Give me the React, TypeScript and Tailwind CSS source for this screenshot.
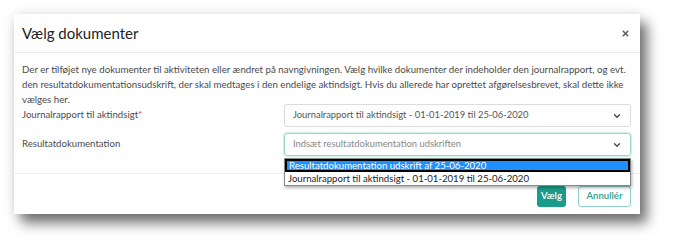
import { ChevronDown, X } from "lucide-react";

export default function App() {
  return (
    <div className="w-[675px] h-[250px] bg-white pt-[14px] pl-[14px] font-['Lato',sans-serif] text-[#4a4a4a]">
      <div className="relative w-[626px] h-[200px] bg-white flex flex-col shadow-[7px_9px_12px_rgba(0,0,0,0.55),0_0_12px_rgba(0,0,0,0.1)]">
        {/* header */}
        <div className="h-[39px] flex items-center justify-between pl-[8px] pr-[10px] border-b border-[#ececec]">
          <h1 className="text-[15px] text-[#222]">Vælg dokumenter</h1>
          <X className="w-[9px] h-[9px] text-[#666]" strokeWidth={4.5} />
        </div>

        {/* body */}
        <div className="flex-1 px-[8px] pt-[9px]">
          <p className="text-[9.7px] leading-[15px] whitespace-nowrap">
            Der er tilføjet nye dokumenter til aktiviteten eller ændret på navngivningen. Vælg hvilke dokumenter der indeholder den journalrapport, og evt.
            <br />
            den resultatdokumentationsudskrift, der skal medtages i den endelige aktindsigt. Hvis du allerede har oprettet afgørelsesbrevet, skal dette ikke
            <br />
            vælges her.
          </p>
          <div className="mt-[-3px] flex flex-col gap-[6px]">
            <div className="flex items-center h-[23px]">
              <label className="w-[262px] text-[9.6px]">
                Journalrapport til aktindsigt<span className="text-[#e0454f]">*</span>
              </label>
              <div className="w-[347px] h-[23px] flex items-center justify-between px-[8px] border border-[#dcdcdc] rounded-[3px] text-[9.4px] text-[#555]">
                <span>Journalrapport til aktindsigt - 01-01-2019 til 25-06-2020</span>
                <ChevronDown className="w-[10px] h-[10px] text-[#444]" strokeWidth={3} />
              </div>
            </div>
            <div className="relative flex items-center h-[23px]">
              <label className="w-[262px] text-[9.6px]">Resultatdokumentation</label>
              <div className="w-[347px] h-[23px] flex items-center justify-between px-[8px] border border-[#9fd6cc] rounded-[3px] shadow-[0_0_0_1px_rgba(130,205,190,0.35)] text-[9.4px] text-[#888]">
                <span>Indsæt resultatdokumentation udskriften</span>
                <ChevronDown className="w-[10px] h-[10px] text-[#444]" strokeWidth={3} />
              </div>
              {/* open dropdown */}
              <div className="absolute left-[262px] top-[25px] w-[347px] bg-white border border-[#888] shadow-[1px_2px_3px_rgba(0,0,0,0.3)] z-10 text-[9.6px]">
                <div className="h-[13px] bg-[#1e90ff] text-white border-2 border-black flex items-center px-[2px] leading-none">
                  Resultatdokumentation udskrift af 25-06-2020
                </div>
                <div className="h-[13px] text-[#222] flex items-center px-[3px] leading-none">
                  Journalrapport til aktindsigt - 01-01-2019 til 25-06-2020
                </div>
              </div>
            </div>
          </div>
        </div>

        {/* footer */}
        <div className="h-[41px] border-t border-[#ececec] flex items-start justify-end gap-[12px] pr-[9px] pt-[12px]">
          <button className="h-[21px] w-[29px] bg-[#1a9c89] text-white text-[9.6px] font-semibold rounded-[3px]">
            Vælg
          </button>
          <button className="h-[21px] w-[53px] border border-[#8fd3c7] text-[#2aa08e] text-[9.6px] font-semibold rounded-[3px]">
            Annullér
          </button>
        </div>
      </div>
    </div>
  );
}
